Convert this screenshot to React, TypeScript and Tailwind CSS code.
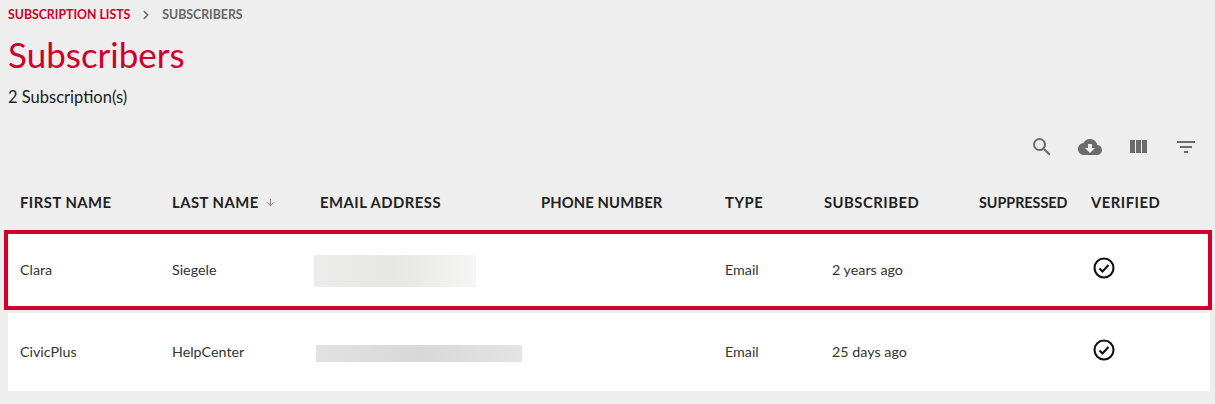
import { ArrowDown, ChevronRight } from 'lucide-react'

const columns = [
  { label: 'FIRST NAME', width: 'w-[152px]' },
  { label: 'LAST NAME', width: 'w-[148px]', sorted: true },
  { label: 'EMAIL ADDRESS', width: 'w-[221px]' },
  { label: 'PHONE NUMBER', width: 'w-[184px]', extra: 'tracking-[0.1px]' },
  { label: 'TYPE', width: 'w-[99px]' },
  { label: 'SUBSCRIBED', width: 'w-[155px]' },
  { label: 'SUPPRESSED', width: 'w-[112px]', extra: 'tracking-normal text-[14.3px] pt-[2px]' },
  { label: 'VERIFIED', width: 'w-[100px]' },
]

function CheckCircle() {
  return (
    <svg width="24" height="24" viewBox="0 0 24 24" fill="none" stroke="#111" strokeWidth="2.1">
      <circle cx="12" cy="12" r="9.5" />
      <path d="M7.5 12.5l3 3 6-6.5" />
    </svg>
  )
}

function Row({ first, last, when, blur, selected }: { first: string; last: string; when: string; blur: string; selected?: boolean }) {
  return (
    <div className={selected ? 'flex items-center h-[80px] w-[1208px] ml-[4px] bg-white border-4 border-[#d0002a] text-[14.3px] text-[#333]' : 'flex items-center h-[78px] w-[1202px] ml-[8px] bg-white text-[14.3px] text-[#333]'}>
      <div className="w-[152px] pl-[12px]">{first}</div>
      <div className="w-[148px] pl-[12px]">{last}</div>
      <div className="w-[221px] pl-[6px]">
        <div className={blur} />
      </div>
      <div className="w-[196px]" />
      <div className="w-[107px]">Email</div>
      <div className="w-[147px]">{when}</div>
      <div className="w-[113px]" />
      <div className="w-[100px] pb-[5px]">
        <CheckCircle />
      </div>
    </div>
  )
}

export default function App() {
  return (
    <div className="w-[1215px] h-[404px] bg-[#eeeeee] overflow-hidden font-['Lato',sans-serif]">
      <div className="flex items-center h-[30px] pl-[8px] text-[12.3px] font-bold">
        <span className="text-[#d0002a]">SUBSCRIPTION LISTS</span>
        <ChevronRight size={14} strokeWidth={2.5} className="mx-[9px] text-[#666]" />
        <span className="text-[#666]">SUBSCRIBERS</span>
      </div>
      <h1 className="pl-[8px] text-[35px] leading-[48px] text-[#d0002a]">Subscribers</h1>
      <p className="pl-[8px] mt-[5px] text-[16.5px] leading-[28px] text-[#222]">2 Subscription(s)</p>
      <div className="flex justify-end items-center gap-[24px] h-[40px] mt-[16px] pr-[17px]">
        <svg width="24" height="24" viewBox="0 0 24 24" fill="#6b6b6b">
          <path d="M15.5 14h-.79l-.28-.27A6.471 6.471 0 0 0 16 9.5 6.5 6.5 0 1 0 9.5 16c1.61 0 3.09-.59 4.23-1.57l.27.28v.79l5 4.99L20.49 19l-4.99-5zm-6 0C7.01 14 5 11.99 5 9.5S7.01 5 9.5 5 14 7.01 14 9.5 11.99 14 9.5 14z" />
        </svg>
        <svg width="24" height="24" viewBox="0 0 24 24" fill="#6b6b6b">
          <path d="M19.35 10.04C18.67 6.59 15.64 4 12 4 9.11 4 6.6 5.64 5.35 8.04 2.34 8.36 0 10.91 0 14c0 3.31 2.69 6 6 6h13c2.76 0 5-2.24 5-5 0-2.64-2.05-4.78-4.65-4.96zM17 13l-5 5-5-5h3V9h4v4h3z" />
        </svg>
        <svg width="24" height="24" viewBox="0 0 24 24" fill="#6b6b6b">
          <path d="M10 18h5V5h-5v13zm-6 0h5V5H4v13zM16 5v13h5V5h-5z" />
        </svg>
        <svg width="24" height="24" viewBox="0 0 24 24" fill="#6b6b6b">
          <path d="M10 18h4v-2h-4v2zM3 6v2h18V6H3zm3 7h12v-2H6v2z" />
        </svg>
      </div>
      <div className="flex items-center h-[50px] pl-[20px] mt-[10px] mb-[3px] text-[14.8px] font-bold tracking-[0.5px] text-[#222]">
        {columns.map((c) => (
          <div key={c.label} className={`${c.width} flex items-center gap-[6px] ${c.extra ?? ''}`}>
            {c.label}
            {c.sorted && <ArrowDown size={11} className="text-[#777]" />}
          </div>
        ))}
      </div>
      <Row selected first="Clara" last="Siegele" when="2 years ago" blur="h-[32px] w-[162px] mt-[2px] bg-gradient-to-r from-[#ececec] via-[#e6e6e4] to-[#f6f6f6]" />
      <div className="h-[3px]" />
      <Row first="CivicPlus" last="HelpCenter" when="25 days ago" blur="h-[17px] w-[206px] ml-[2px] mt-[3px] bg-gradient-to-r from-[#e2e2e2] via-[#d8d8d8] to-[#e4e4e4]" />
    </div>
  )
}
